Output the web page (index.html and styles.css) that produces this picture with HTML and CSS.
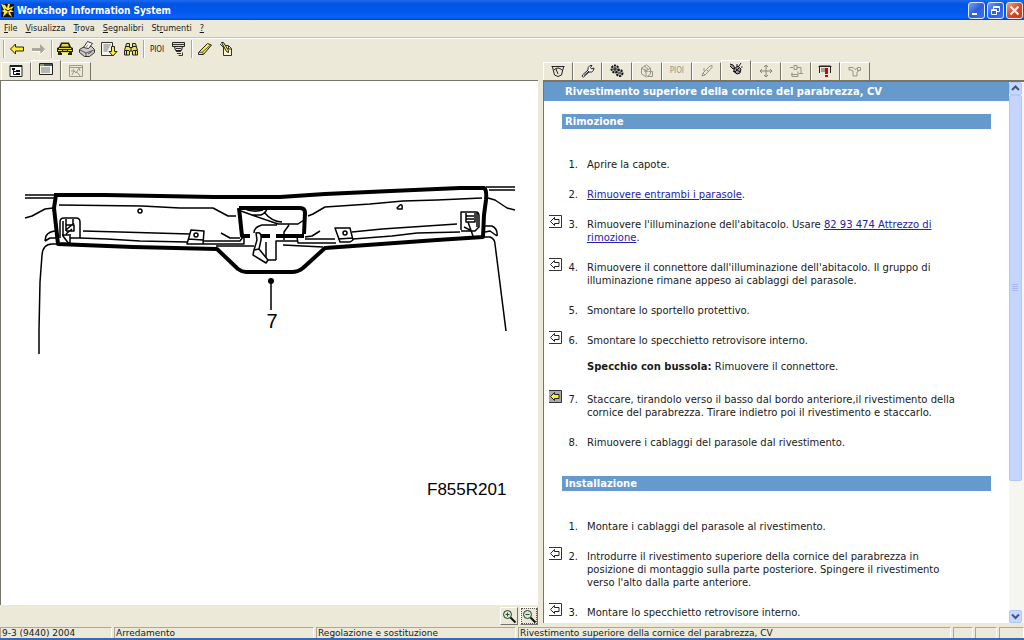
FILE: index.html
```html
<!DOCTYPE html>
<html lang="it">
<head>
<meta charset="utf-8">
<title>Workshop Information System</title>
<link rel="stylesheet" href="styles.css">
</head>
<body>
<div class="app">
  <header class="titlebar">
    <svg class="app-icon" width="13" height="13" viewBox="0 0 13 13" aria-hidden="true"><path fill="#111" d="M0 0h13v13H0z"/><path fill="#ffe640" d="M0 0l4 1 2 3 1-4h2l-1 4 5-2-3 4 3 2-4 0 2 5-5-4-4 4 1-5-3-1 3-1z"/><path d="M4 5l3 2 3-2M6 9h2" stroke="#111" fill="none"/></svg>
    <h1 class="title">Workshop Information System</h1>
    <div class="window-buttons">
      <button class="win" aria-label="Riduci"><svg width="15" height="15" viewBox="0 0 15 15"><path d="M3 11h5" stroke="#fff" stroke-width="2"/></svg></button>
      <button class="win" aria-label="Ripristina"><svg width="15" height="15" viewBox="0 0 15 15" fill="none" stroke="#fff"><path d="M3.500 6.500h5v5h-5zM3 7.500h6M5.500 6V3.500h6v5H9M5 4.500h7"/></svg></button>
      <button class="win close" aria-label="Chiudi"><svg width="15" height="15" viewBox="0 0 15 15"><path d="M3.500 3.500l8 8M11.500 3.500l-8 8" stroke="#fff" stroke-width="2"/></svg></button>
    </div>
  </header>

  <nav class="menubar">
    <button class="menu"><u>F</u>ile</button>
    <button class="menu"><u>V</u>isualizza</button>
    <button class="menu"><u>T</u>rova</button>
    <button class="menu"><u>S</u>egnalibri</button>
    <button class="menu">St<u>r</u>umenti</button>
    <button class="menu"><u>?</u></button>
  </nav>

  <div class="toolbar" role="toolbar">
    <span class="sep"></span>
    <button class="tool" aria-label="Indietro"><svg width="18" height="16" viewBox="0 0 18 16"><path d="M2.500 8l5-5v3h8v4h-8v3z" fill="#ffee2e" stroke="#222"/></svg></button>
    <button class="tool" aria-label="Avanti"><svg width="18" height="16" viewBox="0 0 18 16"><path d="M15 8l-5-5v4H2v3h8v4z" fill="#aaa79b"/><path d="M2 10.500h8V14l5-5" stroke="#fff" fill="none"/></svg></button>
    <span class="sep"></span>
    <button class="tool" aria-label="Veicolo"><svg width="18" height="16" viewBox="0 0 18 16"><path d="M3 6l2-4.500h8L15 6l2 1v4h-1v3h-4v-2H6v2H2v-3H1V7z" fill="#222"/><path d="M5 5.500l1-2.500h6l1 2.500z" fill="#e8dc30"/><path d="M3 7.500h12M2 9.500h4M12 9.500h4M5 11.500h8" stroke="#e8dc30"/><path d="M7 9.500h4" stroke="#aaa"/></svg></button>
    <button class="tool" aria-label="Stampa"><svg width="18" height="16" viewBox="0 0 18 16"><path d="M1.500 8.500l5-3h7l3 3v3l-5 4h-5l-5-4z" fill="#ccc" stroke="#333"/><path d="M5.500 6.500l4-6 5 2-4 5z" fill="#fff" stroke="#333"/><path d="M2 9l6 3 8-3M8 12v3M10 13l4-2.500" stroke="#555" fill="none"/><path d="M10 3.500l-2 3" stroke="#888"/></svg></button>
    <button class="tool" aria-label="Scarica"><svg width="18" height="16" viewBox="0 0 18 16"><path d="M1.500 1.500h11v13h-11z" fill="#f5f5ee" stroke="#333"/><path d="M3.500 4h7M3.500 6h6M3.500 8h5M3.500 10h4" stroke="#777"/><path d="M11.500 5.500h3v5h2.500l-4 4.500-4-4.500h2.500z" fill="#ffee2e" stroke="#222"/></svg></button>
    <button class="tool" aria-label="Cerca"><svg width="18" height="16" viewBox="0 0 18 16"><path d="M4.500 2.500h3v4h3v-4h3l2 7v4.500h-5v-4h-3v4h-5v-4.500z" fill="#eee04a" stroke="#222"/><path d="M4 5.500h4M10 5.500h4M3 9.500h4M11 9.500h4M4.500 10v4M13.500 10v4M9 7v3" stroke="#222"/></svg></button>
    <span class="sep"></span>
    <button class="tool pioi">PIOI</button>
    <button class="tool" aria-label="Diagnosi"><svg width="18" height="16" viewBox="0 0 18 16"><path d="M2.500 1.500h12v4h-12zM4.500 5.500h8l-1 4h-6z" fill="#ffee2e" stroke="#222"/><path d="M3 3.500h11M6 7.500h5M6 10.500h5M7 12.500h4M8.500 14.500h4v-3" stroke="#333" fill="none"/></svg></button>
    <span class="sep"></span>
    <button class="tool" aria-label="Evidenzia"><svg width="18" height="16" viewBox="0 0 18 16"><path d="M2.500 11.500l9-9 4 1.500-8 9.500h-5z" fill="#ffee2e" stroke="#222"/><path d="M2.500 11.500l4-.500 8-7M6.500 11l1 2.500" stroke="#555" fill="none"/></svg></button>
    <button class="tool" aria-label="Nota"><svg width="18" height="16" viewBox="0 0 18 16"><path d="M5.500 4.500h5l3 3v7h-8z" fill="#f8f5d0" stroke="#333"/><path d="M3.500 1.500l2 0 5 8v2l-2-1z" fill="#ffee2e" stroke="#222"/><path d="M10.500 5v3h3M2 3l3 3" stroke="#333" fill="none"/></svg></button>
  </div>

  <main class="panes">
    <section class="pane">
      <div class="tabs tabs-left" role="tablist">
        <button class="tab" role="tab" aria-label="Struttura"><svg width="14" height="14" viewBox="0 0 14 14"><path d="M1 1.500h12v11H1z" fill="#fff" stroke="#222"/><path d="M1 2h12" stroke="#222" stroke-width="2"/><path d="M4.500 4v6.500H7M4.500 7.500H7" stroke="#111" fill="none"/><path d="M3 4h3v2H3zM7 6h4v2H7zM7 9h4v2H7z" fill="#111"/></svg></button>
        <button class="tab active" role="tab" aria-selected="true" aria-label="Figura"><svg width="14" height="14" viewBox="0 0 14 14"><path d="M.500 1.500h13v11H.500z" fill="#f4f4ee" stroke="#222"/><path d="M1 3h12" stroke="#4c5a58" stroke-width="2"/><path d="M2 6h9M2 8h9M2 10h9" stroke="#777"/><path d="M1 3h4" stroke="#ded944" stroke-width="1"/></svg></button>
        <button class="tab" role="tab" aria-label="Schema"><svg width="14" height="14" viewBox="0 0 14 14" fill="none" stroke="#9c9a8c"><path d="M.500 1.500h13v11H.500zM1 3.500h12M3 11l2-4 2 2 3-5 1 3M4 5l2 3 3 1 2 3M2 7h3"/></svg></button>
      </div>
      <div class="figure">
        <svg class="drawing" viewBox="1 81 537 524" role="img" aria-label="Cornice del parabrezza, particolare 7">
          <g class="thick">
            <path d="M54 195H105L214 197H280L325 194L391 191L460 188H484Q487 190 486 200L484 215L483 237L437 240L325 248L303 268Q298 272 292 272H246Q242 272 238 269L217 249L133 247L82 245L58 244L54 208L56 195"/>
            <path d="M239 208H300Q305 208 305 213L304 234M239 208L242 236H250M261 236H270M276 236H304"/>
          </g>
          <g class="thin">
            <path d="M25 195H55M25 198H54M25 218L32 216L45 209L53 208M59 205L142 206L180 208H213L228 216H236"/>
            <circle cx="140" cy="211" r="2"/>
            <path d="M45 241L46 236Q49 231 57 231M45 241L50 238H58M39 354V330L40 282L42 255Q43 244 52 244H59"/>
            <path d="M60 238V222Q60 218 64 218H76Q80 218 80 222V238H70M66 219V231M73 219V225M66 225H74V231H66M66 230L74 223M63 221V236L69 244M70 236V244M66 234L72 229M62 235H71"/>
            <path d="M83 231L120 232L190 234M80 238L107 239L140 241L187 242"/>
            <path d="M191 230L204 231L203 244H187ZM188 239L203 240M203 241H240L243 237M203 244H244V237M221 233L230 238H240M216 246H254"/>
            <circle cx="196" cy="235" r="2"/>
            <path d="M241 211L252 215H261Q267 212 267 208M243 208Q252 213 263 210M252 215L278 224H298L304 220M254 233Q254 227 262 225H277M264 212Q272 222 282 222M289 225L284 232V240"/>
            <path d="M266 242V257M276 260V241H298M276 260H268M297 237L298 243H336M305 239H335M283 245L323 247M305 237L312 236L320 231M308 216L313 214L325 207L370 204L403 201L437 200L482 198"/>
            <path class="solid" d="M256 233Q262 231 261 240L259 249L268 260L266 263L253 255L254 250L257 240ZM254 250L259 249"/>
            <path d="M397 208L400 205Q403 204 402 209H398Z"/>
            <path d="M335 228H350L353 240L350 242H340ZM338 239L353 238M352 232L382 229L457 224M353 239L392 236L417 233L460 232"/>
            <circle cx="345" cy="233" r="2"/>
            <path d="M461 230V212H476Q479 212 479 216V227L475 231H461M466 213V222H475V213M466 216H474M466 219H474M468 222L473 236M464 227L470 230M477 213V227"/>
            <path d="M486 187H515M489 190H515M488 198L495 200L507 208L515 210M485 226H492Q498 229 497 236M485 232L490 231L497 236M483 237H490Q495 239 495 244L506 331M271 281V310"/>
          </g>
          <circle cx="271" cy="281" r="3"/>
          <text class="callout" x="272" y="328" text-anchor="middle">7</text>
          <text class="figure-code" x="427" y="495">F855R201</text>
        </svg>
      </div>
      <div class="zoombar">
        <button class="zoom" aria-label="Ingrandisci"><svg width="16" height="16" viewBox="0 0 16 16"><circle cx="6.500" cy="6.500" r="4" fill="#dce6d4" stroke="#333"/><path d="M4.500 6.500h4M6.500 4.500v4" stroke="#175d27"/><path d="M9.500 9.500l5 5" stroke="#111" stroke-width="2"/></svg></button>
        <button class="zoom focused" aria-label="Riduci figura"><svg width="16" height="16" viewBox="0 0 16 16"><circle cx="6.500" cy="6.500" r="4" fill="#dce6d4" stroke="#333"/><path d="M4.500 6.500h4" stroke="#175d27"/><path d="M9.500 9.500l5 5" stroke="#111" stroke-width="2"/></svg></button>
      </div>
    </section>

    <section class="pane">
      <div class="tabs tabs-right" role="tablist">
        <button class="tab" role="tab" aria-label="Dati tecnici"><svg width="14" height="14" viewBox="0 0 14 14" fill="none" stroke="#222"><path d="M.500 2.500h13M1.500 3l2 8Q7 14 10.500 11l2-8M3 6Q7 2 11 6M7 10L5 5"/></svg></button>
        <button class="tab" role="tab" aria-label="Attrezzi"><svg width="14" height="14" viewBox="0 0 14 14"><path d="M1.500 11L7 6q-.500-3 2-4.500l2 0-1.500 2 1 1.500 2.500-1q0 3-2.500 4L8 8l-5.500 5q-2 0-1-2z" fill="#fff" stroke="#222"/><path d="M3 11.500L8 7" stroke="#222"/></svg></button>
        <button class="tab" role="tab" aria-label="Regolazione"><svg width="14" height="14" viewBox="0 0 14 14" fill="#bbb" stroke="#111"><circle cx="5" cy="5" r="3.500" stroke-dasharray="2 1" stroke-width="2"/><circle cx="9.500" cy="9" r="3" stroke-dasharray="2 1" stroke-width="2"/><path d="M3 5h4M5 3v4M8 9h3"/></svg></button>
        <button class="tab" role="tab" aria-label="Posizione"><svg width="14" height="14" viewBox="0 0 14 14" fill="none" stroke="#96958a"><path d="M1.500 4l5-3 4 3v6l-4 3-5-3zM2 4.500l4 2 4-2M6 7v5M4 2l4 3M8.500 7.500h4v5h-5M5 5v3l3-1"/></svg></button>
        <button class="tab pioi" role="tab">PIOI</button>
        <button class="tab" role="tab" aria-label="Guasti"><svg width="14" height="14" viewBox="0 0 14 14" fill="none" stroke="#96958a"><path d="M2 12l1-3 7-7 2-.500v2L5 11zM4 7V4M3 9l2 2M7 6l2 2"/></svg></button>
        <button class="tab active" role="tab" aria-selected="true" aria-label="Sostituzione"><svg width="14" height="14" viewBox="0 0 14 14" fill="#999" stroke="#111"><path d="M1 2l3 1 2 3-2 1-3-3M5 7l4-3 3 3-1 4-3 1-3-3zM10 4l2-3M8 5V2M4 9l4 3M7 7l4 3M10 6l-4 4M12 5h1.500"/></svg></button>
        <button class="tab" role="tab" aria-label="Smontaggio"><svg width="14" height="14" viewBox="0 0 14 14" fill="none" stroke="#85847a"><path d="M7 1v12M1 7h12M5 3l2-2 2 2M5 11l2 2 2-2M3 5L1 7l2 2M11 5l2 2-2 2"/></svg></button>
        <button class="tab" role="tab" aria-label="Circuiti"><svg width="14" height="14" viewBox="0 0 14 14" fill="none" stroke="#96958a"><path d="M1 3.500h3M8 3.500h4v6M5 1.500h3v4H5zM2 10.500h7v-3M3 8.500v4h6v-2M10 9.500h4"/></svg></button>
        <button class="tab" role="tab" aria-label="Avvisi"><svg width="14" height="14" viewBox="0 0 14 14"><path d="M1.500 9V2h11v7M.500 2.500h13" stroke="#222" fill="none"/><path d="M3 5h5M3 7h5" stroke="#555"/><path d="M8.500 4v6M8.500 11v2" stroke="#d80000" stroke-width="3"/></svg></button>
        <button class="tab" role="tab" aria-label="Ricambi"><svg width="14" height="14" viewBox="0 0 14 14" fill="none" stroke="#96958a"><path d="M1 3.500h4l2 2 2-1M3 6l2 1v5h4V8l3-2M9.500 3.500h3v3h-3zM1 3v3h2"/></svg></button>
      </div>
      <div class="document">
        <article class="content">
          <h2 class="doc-title">Rivestimento superiore della cornice del parabrezza, CV</h2>
          <h3 class="section-title">Rimozione</h3>
          <ol class="steps">
            <li class="step"><span class="num">1.</span><p>Aprire la capote.</p></li>
            <li class="step"><span class="num">2.</span><p><a href="#">Rimuovere entrambi i parasole</a>.</p></li>
            <li class="step"><button class="show" aria-label="Mostra figura"><svg width="13" height="13" viewBox="0 0 13 13"><path class="panel" d="M0 .500h12.500v12H0"/><path class="arrow" d="M1.500 6.500l4-4v2h4.500v4H5.500v2z"/></svg></button><span class="num">3.</span><p>Rimuovere l'illuminazione dell'abitacolo. Usare <a href="#">82 93 474 Attrezzo di rimozione</a>.</p></li>
            <li class="step"><button class="show" aria-label="Mostra figura"><svg width="13" height="13" viewBox="0 0 13 13"><path class="panel" d="M0 .500h12.500v12H0"/><path class="arrow" d="M1.500 6.500l4-4v2h4.500v4H5.500v2z"/></svg></button><span class="num">4.</span><p>Rimuovere il connettore dall'illuminazione dell'abitacolo. Il gruppo di illuminazione rimane appeso ai cablaggi del parasole.</p></li>
            <li class="step"><span class="num">5.</span><p>Smontare lo sportello protettivo.</p></li>
            <li class="step with-note"><button class="show" aria-label="Mostra figura"><svg width="13" height="13" viewBox="0 0 13 13"><path class="panel" d="M0 .500h12.500v12H0"/><path class="arrow" d="M1.500 6.500l4-4v2h4.500v4H5.500v2z"/></svg></button><span class="num">6.</span><p>Smontare lo specchietto retrovisore interno.</p><p class="note"><strong>Specchio con bussola:</strong> Rimuovere il connettore.</p></li>
            <li class="step"><button class="show current" aria-label="Mostra figura"><svg width="13" height="13" viewBox="0 0 13 13"><path class="panel" d="M0 .500h12.500v12H0"/><path class="arrow" d="M1.500 6.500l4-4v2h4.500v4H5.500v2z"/></svg></button><span class="num">7.</span><p>Staccare, tirandolo verso il basso dal bordo anteriore,il rivestimento della cornice del parabrezza. Tirare indietro poi il rivestimento e staccarlo.</p></li>
            <li class="step"><span class="num">8.</span><p>Rimuovere i cablaggi del parasole dal rivestimento.</p></li>
          </ol>
          <h3 class="section-title">Installazione</h3>
          <ol class="steps">
            <li class="step"><span class="num">1.</span><p>Montare i cablaggi del parasole al rivestimento.</p></li>
            <li class="step"><button class="show" aria-label="Mostra figura"><svg width="13" height="13" viewBox="0 0 13 13"><path class="panel" d="M0 .500h12.500v12H0"/><path class="arrow" d="M1.500 6.500l4-4v2h4.500v4H5.500v2z"/></svg></button><span class="num">2.</span><p>Introdurre il rivestimento superiore della cornice del parabrezza in posizione di montaggio sulla parte posteriore. Spingere il rivestimento verso l'alto dalla parte anteriore.</p></li>
            <li class="step"><button class="show" aria-label="Mostra figura"><svg width="13" height="13" viewBox="0 0 13 13"><path class="panel" d="M0 .500h12.500v12H0"/><path class="arrow" d="M1.500 6.500l4-4v2h4.500v4H5.500v2z"/></svg></button><span class="num">3.</span><p>Montare lo specchietto retrovisore interno.</p></li>
          </ol>
        </article>
        <div class="scrollbar">
          <button class="scroll-button" aria-label="Scorri su"><svg width="9" height="7" viewBox="0 0 9 7"><path d="M1 5l3.500-3.500L8 5" fill="none" stroke="#3f5688" stroke-width="2"/></svg></button>
          <div class="track"><div class="thumb"><svg width="7" height="8" viewBox="0 0 7 8"><path d="M0 .500h6M0 2.500h6M0 4.500h6M0 6.500h6" stroke="#a4baf0"/></svg></div></div>
          <button class="scroll-button" aria-label="Scorri giù"><svg width="9" height="7" viewBox="0 0 9 7"><path d="M1 1.500L4.500 5 8 1.500" fill="none" stroke="#3f5688" stroke-width="2"/></svg></button>
        </div>
      </div>
    </section>
  </main>

  <footer class="statusbar">
    <span class="cell">9-3 (9440) 2004</span>
    <span class="cell">Arredamento</span>
    <span class="cell">Regolazione e sostituzione</span>
    <span class="cell">Rivestimento superiore della cornice del parabrezza, CV</span>
    <span class="cell"></span>
    <span class="cell"></span>
    <span class="cell"></span>
  </footer>
</div>
</body>
</html>
```

FILE: styles.css
```css
* {
  box-sizing: border-box;
}

body {
  margin: 0;
  background: #ece9d8;
  color: #1a1a1a;
  font-family: "DejaVu Sans", sans-serif;
  font-size: 10px;
  line-height: 13px;
}

button {
  margin: 0;
  padding: 0;
  border: 0;
  background: none;
  color: inherit;
  font: inherit;
}

svg {
  display: block;
}

h1, h2, h3, p, ol {
  margin: 0;
  padding: 0;
}

.app {
  display: flex;
  flex-direction: column;
  height: 100vh;
  overflow: hidden;
  border-bottom: 2px solid #316ac5;
}

/* Title bar */
.titlebar {
  display: flex;
  align-items: center;
  gap: 3px;
  height: 20px;
  flex: none;
  padding: 0 1px;
  background: linear-gradient(#1c6af0, #0054e3 20%, #0058ee 60%, #0a62fa 85%, #0046c8);
}

.title {
  flex: 1;
  color: #fff;
  font-family: "DejaVu Sans Condensed", "DejaVu Sans", sans-serif;
  font-size: 10px;
  font-weight: bold;
}

.window-buttons {
  display: flex;
  gap: 2px;
}

.win {
  border: 1px solid #dfe8fb;
  border-radius: 3px;
  background: linear-gradient(135deg, #7ba0f0, #2b5edc 50%, #3a74ee);
}

.win.close {
  background: linear-gradient(135deg, #f0a088, #d94a25 50%, #c63c16);
}

/* Menus */
.menubar {
  display: flex;
  gap: 8px;
  height: 18px;
  flex: none;
  padding: 0 4px;
  border-bottom: 1px solid #c5c2b2;
  font-family: "DejaVu Sans Condensed", "DejaVu Sans", sans-serif;
  font-size: 9px;
}

/* Toolbar */
.toolbar {
  display: flex;
  align-items: center;
  gap: 4px;
  height: 22px;
  flex: none;
  padding: 0 4px 1px;
  border-top: 1px solid #fff;
}

.sep {
  width: 2px;
  height: 18px;
  margin: 0 -1px;
  border-left: 1px solid #aca899;
  border-right: 1px solid #fff;
}

.pioi {
  min-width: 18px;
  font-family: "DejaVu Sans Condensed", "DejaVu Sans", sans-serif;
  font-size: 8px;
}

/* Panes */
.panes {
  display: grid;
  grid-template-columns: 543fr 481fr;
  flex: 1;
  min-height: 0;
}

.pane {
  display: flex;
  flex-direction: column;
  min-width: 0;
  min-height: 0;
}

.tabs {
  display: flex;
  align-items: flex-end;
  height: 20px;
  flex: none;
}

.tabs-left {
  width: 90px;
  margin-left: 1px;
}

.tabs-right {
  width: 327px;
}

.tab {
  display: flex;
  flex: 1;
  align-items: center;
  justify-content: center;
  height: 18px;
  padding-bottom: 2px;
  border-top: 1px solid #fff;
  border-left: 1px solid #fff;
  border-right: 1px solid #77756a;
}

.tab.active {
  height: 20px;
  padding-bottom: 4px;
}

.tab.pioi {
  color: #96958a;
}

.figure {
  flex: 1;
  min-height: 0;
  margin-right: 5px;
  border-top: 1px solid #77756a;
  border-left: 1px solid #77756a;
  background: #fff;
  overflow: hidden;
}

.drawing {
  width: 100%;
}

.thick,
.thin {
  fill: none;
  stroke: #000;
  stroke-linejoin: round;
}

.thick {
  stroke-width: 4px;
}

.thin {
  stroke-width: 1.5px;
}

.solid {
  fill: #fff;
}

.callout,
.figure-code {
  font-family: "Liberation Sans", sans-serif;
}

.callout {
  font-size: 20px;
}

.figure-code {
  font-size: 17px;
}

.zoombar {
  display: flex;
  justify-content: flex-end;
  gap: 2px;
  height: 22px;
  flex: none;
  padding: 2px 5px 2px 0;
}

.zoom {
  display: flex;
  align-items: center;
  justify-content: center;
  width: 18px;
  border: 1px solid #fff;
  border-right-color: #77756a;
  border-bottom-color: #77756a;
}

.zoom.focused {
  outline: 1px dotted #555;
  outline-offset: -2px;
}

/* Document */
.document {
  display: flex;
  flex: 1;
  min-height: 0;
  margin-bottom: 4px;
  border-top: 2px solid #77756a;
  border-left: 1px solid #77756a;
  background: #fff;
}

.content {
  flex: 1;
  min-width: 0;
  overflow: hidden;
}

.doc-title,
.section-title {
  background: #6699cc;
  color: #fff;
  font-size: 10px;
  font-weight: bold;
}

.doc-title {
  padding: 3px 21px;
}

.section-title {
  margin: 13px 18px 0;
  padding: 1px 3px;
}

.steps {
  list-style: none;
  padding: 29px 43px 0 5px;
}

.step {
  display: grid;
  grid-template-columns: 13px 16px 1fr;
  margin-bottom: 17px;
}

.step.with-note {
  margin-bottom: 20px;
}

.steps + .section-title {
  margin-top: 27px;
}

.step:last-child {
  margin-bottom: 0;
}

.step p {
  grid-column: 3;
  padding-left: 9px;
}

.step .note {
  margin-top: 13px;
}

.num {
  grid-column: 2;
  text-align: right;
}

.show {
  grid-column: 1;
  height: 13px;
  margin-top: -3px;
  margin-bottom: 3px;
}

.panel {
  fill: #fff;
  stroke: #333;
}

.arrow {
  fill: #fff;
  stroke: #222;
}

.current .panel {
  fill: #aaa;
}

.current .arrow {
  fill: #ffee2e;
}

a {
  color: #2222aa;
}

/* Scroll bar */
.scrollbar {
  display: flex;
  flex-direction: column;
  width: 15px;
  flex: none;
  padding-right: 2px;
  background: #f6f6f1;
}

.scroll-button {
  display: flex;
  align-items: center;
  justify-content: center;
  height: 13px;
  border: 1px solid #b4c8f6;
  border-radius: 2px;
  background: #c8d7fc;
}

.track {
  flex: 1;
}

.thumb {
  display: flex;
  align-items: center;
  justify-content: center;
  height: 75%;
  border: 1px solid #b4c8f6;
  border-radius: 2px;
  background: #c6d5fd;
}

/* Status bar */
.statusbar {
  display: grid;
  grid-template-columns: 112fr 200fr 200fr 433fr 20fr 22fr 25fr;
  gap: 2px;
  height: 11px;
  flex: none;
  font-size: 9px;
  line-height: 10px;
}

.cell {
  min-width: 0;
  padding-left: 1px;
  border-top: 1px solid #aca899;
  border-left: 1px solid #aca899;
  border-right: 1px solid #fff;
  overflow: hidden;
  white-space: nowrap;
}
```
